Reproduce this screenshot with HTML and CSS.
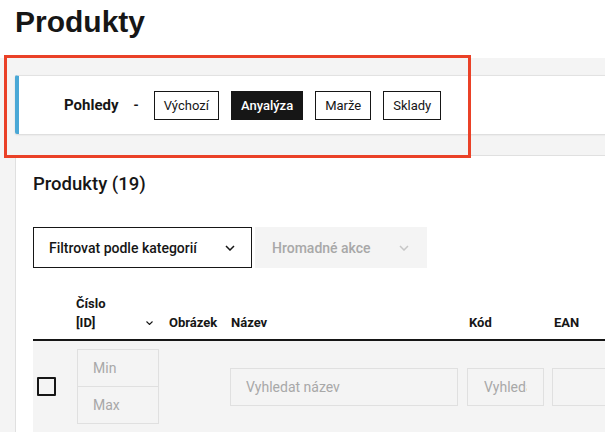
FILE: index.html
```html
<!DOCTYPE html>
<html lang="cs">
<head>
<meta charset="utf-8">
<title>Produkty</title>
<link rel="stylesheet" href="styles.css">
</head>
<body>
<header class="page-head">
  <h1 class="page-title">Produkty</h1>
</header>

<main class="content">
  <section class="views">
    <div class="views-card">
      <span class="views-label">Pohledy</span>
      <span class="views-sep">-</span>
      <div class="views-list">
        <button class="view-btn">Výchozí</button>
        <button class="view-btn is-active">Anyalýza</button>
        <button class="view-btn">Marže</button>
        <button class="view-btn">Sklady</button>
      </div>
    </div>
  </section>

  <section class="panel">
    <h2 class="panel-title">Produkty (19)</h2>

    <div class="toolbar">
      <button class="select select-filter">
        <span>Filtrovat podle kategorií</span>
        <svg class="chev" width="10" height="6" viewBox="0 0 10 6"><path d="M1 1l4 4 4-4" fill="none" stroke="currentColor" stroke-width="1.5"/></svg>
      </button>
      <button class="select select-bulk" disabled>
        <span>Hromadné akce</span>
        <svg class="chev" width="10" height="6" viewBox="0 0 10 6"><path d="M1 1l4 4 4-4" fill="none" stroke="currentColor" stroke-width="1.5"/></svg>
      </button>
    </div>

    <div class="table">
      <div class="t-head">
        <div class="th"></div>
        <div class="th th-sort">
          <span>Číslo<br>[ID]</span>
          <svg class="chev-sm" width="7" height="4" viewBox="0 0 7 4"><path d="M0.5 0.5l3 3 3-3" fill="none" stroke="currentColor" stroke-width="1.1"/></svg>
        </div>
        <div class="th">Obrázek</div>
        <div class="th th-name">Název</div>
        <div class="th th-code">Kód</div>
        <div class="th th-code">EAN</div>
      </div>

      <div class="t-filter">
        <div class="cell"><span class="checkbox"></span></div>
        <div class="cell range">
          <input class="field field-range" placeholder="Min">
          <input class="field field-range field-max" placeholder="Max">
        </div>
        <div class="cell"></div>
        <div class="cell"><input class="field field-name" placeholder="Vyhledat název"></div>
        <div class="cell"><input class="field field-code" placeholder="Vyhledat kód"></div>
        <div class="cell"><input class="field field-ean" placeholder=""></div>
      </div>
    </div>
  </section>
</main>

<div class="callout"></div>
</body>
</html>
```

FILE: styles.css
```css
html, body {
  margin: 0;
  padding: 0;
  overflow: hidden;
  background: #ffffff;
}

body {
  font-family: Roboto, "Noto Sans", Arial, sans-serif;
  color: #161616;
  width: 605px;
  height: 432px;
  position: relative;
}

.page-head {
  height: 58px;
  box-sizing: border-box;
  padding: 5px 0 0 15px;
}

.page-title {
  margin: 0;
  font-family: "Liberation Sans", Arial, sans-serif;
  font-weight: 700;
  font-size: 30px;
  line-height: 34px;
  color: #161616;
}

.content {
  background: #f4f4f4;
}

/* saved views strip */
.views {
  padding: 17px 0 21px 15px;
}

.views-card {
  display: flex;
  align-items: center;
  height: 59px;
  box-sizing: border-box;
  margin-right: -20px;
  background: #ffffff;
  border-left: 4px solid #4aa8d6;
  border-top: 1px solid #e2e2e2;
  border-radius: 2px;
  box-shadow: 0 1px 2px rgba(0, 0, 0, 0.12);
  padding-left: 45px;
}

.views-label {
  font-size: 15px;
  font-weight: 700;
}

.views-sep {
  margin: 0 15px 0 15px;
  font-size: 14px;
  font-weight: 600;
}

.views-list {
  display: flex;
  gap: 12px;
}

.view-btn {
  height: 29px;
  box-sizing: border-box;
  padding: 0 9px;
  border: 1px solid #161616;
  background: #ffffff;
  color: #161616;
  font-family: inherit;
  font-size: 13px;
  font-weight: 400;
  cursor: pointer;
}

.view-btn.is-active {
  background: #161616;
  color: #ffffff;
  font-weight: 500;
}

/* products panel */
.panel {
  background: #ffffff;
  border-top: 1px solid #e0e0e0;
  border-left: 1px solid #e0e0e0;
  margin-left: 15px;
  padding: 16px 0 0 17px;
  height: 300px;
}

.panel-title {
  margin: 0;
  font-size: 18.5px;
  line-height: 24px;
  font-weight: 500;
}

.toolbar {
  display: flex;
  gap: 3px;
  margin-top: 31px;
}

.select {
  display: flex;
  align-items: center;
  justify-content: space-between;
  height: 41px;
  box-sizing: border-box;
  font-family: inherit;
  font-size: 14px;
  font-weight: 500;
  cursor: pointer;
}

.select-filter {
  width: 219px;
  padding: 0 16px 0 15px;
  border: 1px solid #161616;
  background: #ffffff;
  color: #161616;
}

.select-bulk {
  width: 172px;
  padding: 0 18px 0 17px;
  border: none;
  background: #f4f4f4;
  color: #a8a8a8;
}

.select-bulk .chev {
  color: #c6c6c6;
}

/* table */
.table {
  margin-top: 26px;
  width: 640px;
}

.t-head,
.t-filter {
  display: grid;
  grid-template-columns: 43px 93px 61px 237px 85px 1fr;
}

.t-head {
  align-items: end;
  border-bottom: 2px solid #161616;
  padding-bottom: 7px;
}

.th {
  font-size: 13px;
  font-weight: 700;
  line-height: 19px;
}

.th-sort {
  display: flex;
  align-items: flex-end;
  justify-content: space-between;
  padding-right: 16px;
}

.chev-sm {
  margin-bottom: 7px;
}

.th-name {
  padding-left: 1px;
}

.th-code {
  padding-left: 2px;
}

.t-filter {
  align-items: center;
  background: #f4f4f4;
  padding: 8px 0;
}

.cell {
  display: flex;
  align-items: center;
}

.checkbox {
  width: 19px;
  height: 19px;
  box-sizing: border-box;
  border: 2px solid #161616;
  border-radius: 1px;
  margin-left: 4px;
}

.range {
  flex-direction: column;
  align-items: flex-start;
}

.field {
  height: 38px;
  box-sizing: border-box;
  border: 1px solid #e0e0e0;
  background: #f4f4f4;
  font-family: inherit;
  font-size: 14px;
  color: #161616;
  outline: none;
}

.field::placeholder {
  color: #a8a8a8;
}

.field-range {
  width: 82px;
  margin-left: 1px;
  padding: 0 0 0 15px;
}

.field-max {
  margin-top: -1px;
}

.field-name {
  width: 228px;
  padding: 0 16px 0 15px;
}

.field-code {
  width: 77px;
  padding: 0 16px 0 16px;
}

.field-ean {
  width: 100px;
}

/* annotation frame over the views strip */
.callout {
  position: absolute;
  left: 4px;
  top: 55px;
  width: 467px;
  height: 103px;
  box-sizing: border-box;
  border: 3px solid #ea4127;
  pointer-events: none;
}
```
